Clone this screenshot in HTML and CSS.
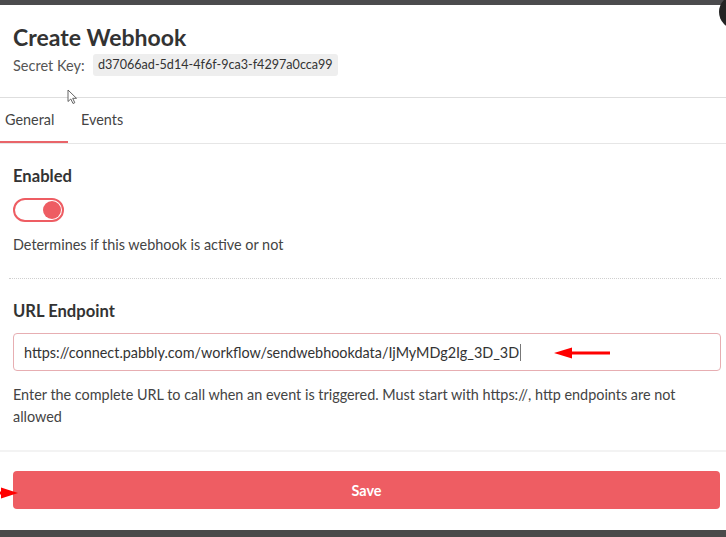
FILE: index.html
```html
<!DOCTYPE html>
<html>
<head>
<meta charset="utf-8">
<link rel="stylesheet" href="styles.css">
</head>
<body>
<div class="bar-top"></div>
<div class="modal">
  <div class="close-btn"></div>
  <header class="head">
    <h1 class="title">Create Webhook</h1>
    <div class="secret">
      <span class="secret-label">Secret Key:</span>
      <span class="secret-key">d37066ad-5d14-4f6f-9ca3-f4297a0cca99</span>
    </div>
    <svg class="mouse" width="12" height="16" viewBox="0 0 12 16"><path d="M1 1 L1 12.5 L3.8 10 L6 14.5 L7.8 13.7 L5.7 9.3 L9.5 9.3 Z" fill="#fff" stroke="#555" stroke-width="0.9" stroke-linejoin="round"/></svg>
  </header>
  <nav class="tabs">
    <div class="tab active">General</div>
    <div class="tab">Events</div>
  </nav>
  <section class="content">
    <h2 class="label">Enabled</h2>
    <div class="toggle"><span class="knob"></span></div>
    <p class="desc">Determines if this webhook is active or not</p>
    <div class="dots"></div>
    <h2 class="label">URL Endpoint</h2>
    <div class="field">
      <span class="field-text">https://connect.pabbly.com/workflow/sendwebhookdata/IjMyMDg2Ig_3D_3D</span><span class="caret"></span>
      <svg class="arrow arrow-url" width="58" height="12" viewBox="0 0 58 12"><path d="M16 6 H56" stroke="#f00" stroke-width="3"/><path d="M0 6 L18 0.5 L18 11.5 Z" fill="#f00"/></svg>
    </div>
    <p class="help">Enter the complete URL to call when an event is triggered. Must start with https://, http endpoints are not allowed</p>
  </section>
  <div class="sep"></div>
  <div class="footer">
    <svg class="arrow arrow-save" width="20" height="12" viewBox="0 0 20 12"><path d="M0 6 H6" stroke="#f00" stroke-width="3"/><path d="M19 6 L2 0.5 L2 11.5 Z" fill="#f00"/></svg>
    <button class="save">Save</button>
  </div>
</div>
<div class="bar-bottom"></div>
</body>
</html>
```

FILE: styles.css
```css
* { box-sizing: border-box; }
html, body {
  margin: 0;
  padding: 0;
  background: #fff;
  width: 726px;
  height: 537px;
  overflow: hidden;
  font-family: Lato, "Open Sans", "Liberation Sans", sans-serif;
  color: #333;
}
.bar-top {
  height: 5px;
  background: #4b4b4d;
}
.bar-bottom {
  height: 7px;
  background: #4a4a4a;
}
.modal {
  position: relative;
  height: 525px;
  background: #fff;
}
.close-btn {
  position: absolute;
  right: -27px;
  top: -10px;
  width: 34px;
  height: 34px;
  border-radius: 50%;
  background: #232323;
}
.head {
  position: relative;
  padding: 19px 13px 21px 13px;
  border-bottom: 1px solid #dedede;
}
.title {
  margin: 0;
  font-size: 23px;
  line-height: 26px;
  font-weight: 700;
  color: #333;
}
.secret {
  display: flex;
  align-items: center;
  margin-top: 4px;
  height: 22px;
  font-size: 14.5px;
}
.secret-label {
  color: #555;
  width: 80px;
}
.secret-key {
  display: inline-block;
  background: #eeeeee;
  border-radius: 3px;
  padding: 0 5px;
  line-height: 22px;
  font-size: 12.6px;
  color: #333;
}
.mouse {
  position: absolute;
  left: 67px;
  top: 84px;
}
.tabs {
  display: flex;
  height: 46px;
  border-bottom: 1px solid #e6e6e6;
}
.tab {
  display: flex;
  align-items: center;
  height: 45px;
  font-size: 14.4px;
  color: #444;
  padding: 0 13px 2px 13px;
}
.tab.active {
  padding: 0 13px 0 5px;
  width: 68px;
  border-bottom: 2px solid #e96469;
}
.content {
  padding: 0 5px 0 13px;
}
.label {
  margin: 22px 0 0 0;
  font-size: 16.6px;
  line-height: 20px;
  font-weight: 700;
  color: #333;
}
.toggle {
  margin-top: 12px;
  width: 51px;
  height: 24px;
  border: 2px solid #ee5d63;
  border-radius: 12px;
  display: flex;
  align-items: center;
  justify-content: flex-end;
  padding-right: 1px;
}
.knob {
  width: 18px;
  height: 18px;
  border-radius: 50%;
  background: #ee5d63;
}
.desc {
  margin: 13px 0 0 0;
  font-size: 14.4px;
  line-height: 20px;
  color: #444;
}
.dots {
  margin: 23px 0 0 -4px;
  border-top: 1px dotted #cfcfcf;
}
.field {
  position: relative;
  margin-top: 12px;
  height: 38px;
  border: 1px solid #e7aeb2;
  border-radius: 4px;
  padding: 0 10px;
  display: flex;
  align-items: center;
  font-size: 14.4px;
  color: #333;
}
.caret {
  display: inline-block;
  width: 1px;
  height: 17px;
  background: #777;
  margin-left: 1px;
}
.arrow {
  position: absolute;
}
.arrow-url {
  left: 540px;
  top: 13px;
}
.help {
  margin: 13px 0 0 0;
  font-size: 14.4px;
  line-height: 22px;
  color: #444;
}
.sep {
  margin-top: 22px;
  height: 2px;
  background: #f3f3f3;
}
.footer {
  position: relative;
  padding: 19px 6px 0 13px;
}
.arrow-save {
  left: -1px;
  top: 35px;
}
.save {
  display: block;
  width: 100%;
  height: 38px;
  border: none;
  border-radius: 4px;
  background: #ee5d63;
  color: #fff;
  font-family: Lato, "Open Sans", "Liberation Sans", sans-serif;
  font-size: 14.4px;
  font-weight: 700;
}
```
